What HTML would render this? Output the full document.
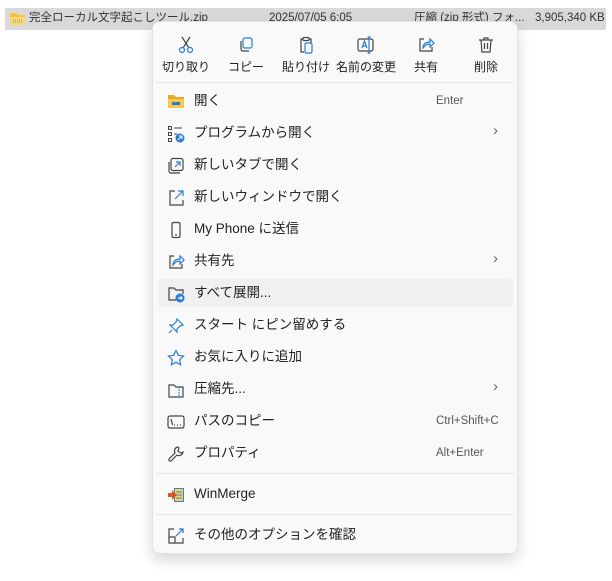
<!DOCTYPE html>
<html><head><meta charset="utf-8"><style>
*{margin:0;padding:0;box-sizing:border-box}
body{width:612px;height:581px;background:#fff;position:relative;overflow:hidden;font-family:"Liberation Sans","Noto Sans CJK JP",sans-serif;color:#1a1a1a}
.bar{position:absolute;left:5px;top:8px;width:601px;height:22px;background:#d9d9d9}
.t{position:absolute;font-size:11.5px;line-height:14px;white-space:nowrap;color:#333}
.menu{position:absolute;left:152px;top:21px;width:366px;height:533px;background:#f9f9f9;border:1px solid #e3e3e3;border-radius:8px;box-shadow:0 6px 14px rgba(0,0,0,.16)}
.tb{position:absolute;top:0;width:60px;text-align:center}
.tb svg{position:absolute;left:21px;top:14px}
.tb span{position:absolute;left:0;width:60px;top:36px;font-size:12px;color:#222}
.sep{position:absolute;left:3px;right:3px;height:1px;background:#e5e5e5}
.it{position:absolute;left:0;width:364px;height:28px}
.it svg{position:absolute;left:14px;top:6px}
.it .l{position:absolute;left:41px;top:6px;font-size:13.5px;line-height:16px;white-space:nowrap;color:#222}
.it .k{position:absolute;left:283px;top:8px;font-size:11.5px;color:#555;white-space:nowrap}
.it .a{position:absolute;left:340px;top:3px;font-size:15px;color:#666}
.hov{background:#f0f0f0;border-radius:4px;left:5px;width:355px}
.hov svg{left:9px}.hov .l{left:36px}
</style></head><body>
<div class="bar"></div>
<svg style="position:absolute;left:9px;top:11px" width="17" height="15"><path d="M1 2h6l2 2h7v10H1z" fill="#f2c53d"/><rect x="1" y="6" width="15" height="8" fill="#f9d970"/><path d="M4 9h9M4 11h9" stroke="#999" stroke-dasharray="1 1"/></svg>
<div class="t" style="left:29px;top:11px">完全ローカル文字起こしツール.zip</div>
<div class="t" style="left:269px;top:11px">2025/07/05 6:05</div>
<div class="t" style="left:414px;top:11px">圧縮 (zip 形式) フォ...</div>
<div class="t" style="left:535px;top:11px">3,905,340 KB</div>
<div class="menu">
 <div class="tb" style="left:3px"><svg width="18" height="18" fill="none" stroke="#444" stroke-width="1.2"><path d="M5 1l7 11M13 1L6 12"/><circle cx="5" cy="14" r="2.5" stroke="#2b7cd3"/><circle cx="13" cy="14" r="2.5" stroke="#2b7cd3"/></svg><span>切り取り</span></div>
 <div class="tb" style="left:63px"><svg width="18" height="18" fill="none" stroke-width="1.2"><rect x="6" y="2" width="9" height="10" rx="2" stroke="#2b7cd3"/><path d="M4 5v8a2 2 0 0 0 2 2h6" stroke="#444"/></svg><span>コピー</span></div>
 <div class="tb" style="left:123px"><svg width="18" height="18" fill="none" stroke-width="1.2"><path d="M6 3H4v13h3M12 3h2v4" stroke="#444"/><rect x="6" y="1.5" width="6" height="3" rx="1" stroke="#444"/><rect x="8" y="7" width="7" height="10" rx="1.5" stroke="#2b7cd3"/></svg><span>貼り付け</span></div>
 <div class="tb" style="left:183px"><svg width="18" height="18" fill="none" stroke-width="1.2"><rect x="1" y="3" width="15" height="12" rx="2" stroke="#444"/><path d="M5 12l2.5-7 2.5 7M6 10h3" stroke="#2b7cd3"/><path d="M12 1v16M10.5 1h3M10.5 17h3" stroke="#2b7cd3"/></svg><span>名前の変更</span></div>
 <div class="tb" style="left:243px"><svg width="18" height="18" fill="none" stroke-width="1.2"><path d="M7 3H3v12h12v-4" stroke="#444"/><path d="M6 12c0-4 3-6 7-6V3l4 4-4 4V8c-3 0-5 1-7 4z" stroke="#2b7cd3"/></svg><span>共有</span></div>
 <div class="tb" style="left:303px"><svg width="18" height="18" fill="none" stroke="#444" stroke-width="1.2"><path d="M2 4h14M7 4V2h4v2M4 4l1 12h8l1-12M7.5 7v6M10.5 7v6"/></svg><span>削除</span></div>
 <div class="sep" style="top:60px"></div>
 <div class="it" style="top:65px"><svg width="18" height="16"><path d="M1 2h6l2 2h8v11H1z" fill="#e8a825"/><rect x="1" y="6" width="16" height="9" fill="#f6c94a"/><rect x="5" y="9" width="8" height="3" fill="#2b7cd3"/></svg><span class="l">開く</span><span class="k">Enter</span></div>
 <div class="it" style="top:97px"><svg width="18" height="18" fill="none" stroke="#444"><rect x="1.5" y="1.5" width="3" height="3"/><rect x="1.5" y="7.5" width="3" height="3"/><rect x="1.5" y="13.5" width="3" height="3"/><path d="M7 3h8M7 9h3"/><circle cx="13" cy="13" r="4.5" fill="#2b7cd3" stroke="none"/><path d="M11 15l4-4M12 11h3v3" stroke="#fff"/></svg><span class="l">プログラムから開く</span><span class="a">›</span></div>
 <div class="it" style="top:129px"><svg width="18" height="18" fill="none" stroke-width="1.2"><rect x="4" y="1.5" width="12" height="12" rx="2" stroke="#444"/><path d="M2 5v9a2 2 0 0 0 2 2h9" stroke="#444"/><path d="M8 10l5-5M9 5h4v4" stroke="#2b7cd3"/></svg><span class="l">新しいタブで開く</span></div>
 <div class="it" style="top:161px"><svg width="18" height="18" fill="none" stroke-width="1.2"><path d="M8 2H3v14h13v-5" stroke="#444"/><path d="M8 10l8-8M11 2h5v5" stroke="#2b7cd3"/></svg><span class="l">新しいウィンドウで開く</span></div>
 <div class="it" style="top:193px"><svg width="18" height="18" fill="none" stroke="#444" stroke-width="1.2"><rect x="5" y="1.5" width="8" height="15" rx="1.5"/><path d="M8 14h2"/></svg><span class="l">My Phone に送信</span></div>
 <div class="it" style="top:225px"><svg width="18" height="18" fill="none" stroke-width="1.2"><path d="M7 3H3v12h12v-4" stroke="#444"/><path d="M6 12c0-4 3-6 7-6V3l4 4-4 4V8c-3 0-5 1-7 4z" stroke="#2b7cd3"/></svg><span class="l">共有先</span><span class="a">›</span></div>
 <div class="it hov" style="top:257px"><svg width="18" height="18" fill="none" stroke-width="1.2"><path d="M9 15H2V3h5l2 2h7v4" stroke="#444"/><circle cx="13" cy="13" r="4.5" fill="#2b7cd3"/><path d="M11 13h4M13.5 11.5l1.5 1.5-1.5 1.5" stroke="#fff"/></svg><span class="l">すべて展開...</span></div>
 <div class="it" style="top:289px"><svg width="18" height="18" fill="none" stroke="#2b7cd3" stroke-width="1.2"><path d="M10 2l6 6-3 1-3 3 0 3-7-7 3 0 3-3zM5 13l-3 3"/></svg><span class="l">スタート にピン留めする</span></div>
 <div class="it" style="top:321px"><svg width="18" height="18" fill="none" stroke="#2b7cd3" stroke-width="1.2"><path d="M9 1.5l2.3 4.8 5.2.7-3.8 3.6.9 5.2L9 13.3l-4.6 2.5.9-5.2L1.5 7l5.2-.7z"/></svg><span class="l">お気に入りに追加</span></div>
 <div class="it" style="top:353px"><svg width="18" height="18" fill="none" stroke-width="1.2"><path d="M2 4h5l2 2h7v10H2z" stroke="#444"/><path d="M12 6v9" stroke="#2b7cd3" stroke-dasharray="1.5 1"/></svg><span class="l">圧縮先...</span><span class="a">›</span></div>
 <div class="it" style="top:385px"><svg width="18" height="18" fill="none" stroke="#444" stroke-width="1.2"><rect x="1" y="3" width="16" height="12" rx="2"/><path d="M4 6l1.5 6M7 12h1M10 12h1M13 12h1"/></svg><span class="l">パスのコピー</span><span class="k" style="left:283px">Ctrl+Shift+C</span></div>
 <div class="it" style="top:417px"><svg width="18" height="18" fill="none" stroke="#444" stroke-width="1.2"><path d="M11 2a4 4 0 0 0-3 6l-6 6a1.5 1.5 0 0 0 2 2l6-6a4 4 0 0 0 6-3l-2.5 1L11 6l1-3z"/></svg><span class="l">プロパティ</span><span class="k" style="left:283px">Alt+Enter</span></div>
 <div class="sep" style="top:451px"></div>
 <div class="it" style="top:458px"><svg width="18" height="18"><rect x="7" y="2" width="10" height="14" fill="#3b82c4"/><rect x="8" y="3" width="8" height="12" fill="#f4d35e"/><path d="M9 6h6M9 9h6M9 12h6" stroke="#3b82c4"/><path d="M1 7h4V4l5 5-5 5v-3H1z" fill="#d2572a"/></svg><span class="l">WinMerge</span></div>
 <div class="sep" style="top:492px"></div>
 <div class="it" style="top:499px"><svg width="18" height="18" fill="none" stroke-width="1.2"><path d="M7 2H2v14h14v-5M2 10h6v6" stroke="#444"/><path d="M9 9l7-7M12 2h4v4" stroke="#2b7cd3"/></svg><span class="l">その他のオプションを確認</span></div>
</div>
</body></html>
